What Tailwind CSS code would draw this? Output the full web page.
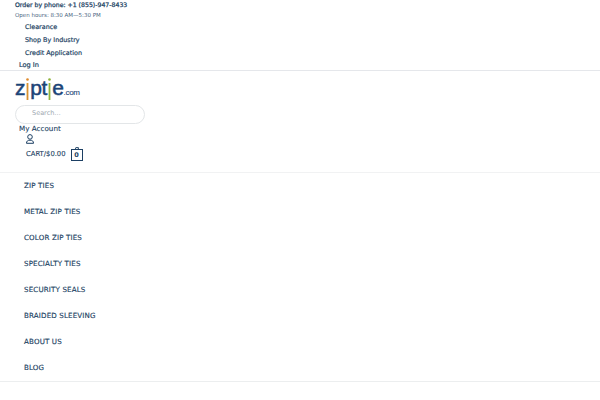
<!doctype html>
<html><head><meta charset="utf-8"><script src="https://cdn.jsdelivr.net/npm/@tailwindcss/browser@4"></script></head>
<body class="bg-white">
<div class="w-[600px] h-[400px] overflow-hidden bg-white text-[#1c3f63] font-['DejaVu_Sans',sans-serif] text-[7px]">
  <div class="h-[70px]">
    <div class="h-[10px] pl-[15px] leading-[10px] text-[6.200px] [-webkit-text-stroke:0.25px_#1c3f63]">Order by phone: +1 (855)-947-8433</div>
    <div class="h-[11px] pl-[15px] leading-[11px] text-[5.500px] text-[#4a6580]">Open hours: 8:30 AM—5:30 PM</div>
    <div class="pl-[25px] flex flex-col text-[6.400px] [-webkit-text-stroke:0.2px_#1c3f63]">
      <div class="h-[13px] leading-[13px]">Clearance</div>
      <div class="h-[13px] leading-[13px]">Shop By Industry</div>
      <div class="h-[13px] leading-[13px]">Credit Application</div>
    </div>
    <div class="pl-[19px] h-[11px] leading-[11px] text-[6.600px] [-webkit-text-stroke:0.2px_#1c3f63]">Log In</div>
  </div>
  <div class="h-px bg-[#e5e7eb]"></div>
  <div class="h-[34px] pl-[15px] flex items-center">
    <div class="relative flex items-baseline h-[26px] text-[#1b4477] font-['Liberation_Sans',sans-serif] leading-[26px] tracking-[-0.3px] [-webkit-text-stroke:0.5px_#1b4477]">
      <span class="text-[21px]">z</span>
      <svg class="w-[5px] h-[24px] self-center" viewBox="0 0 5 24"><circle cx="2.500" cy="3.500" r="1.300" fill="#e08a2c"/><path d="M2.500 7V24" stroke="#d9922f" stroke-width="1.800"/></svg>
      <span class="text-[21px]">pt</span>
      <svg class="w-[5px] h-[24px] self-center" viewBox="0 0 5 24"><circle cx="2.500" cy="3.500" r="1.300" fill="#8fb43a"/><path d="M2.500 7V24" stroke="#8fb43a" stroke-width="1.800"/></svg>
      <span class="text-[21px]">e</span><span class="text-[8px] [-webkit-text-stroke:0.1px_#1b4477]">.com</span>
    </div>
  </div>
  <div class="pl-[15px] h-[19px]">
    <div class="w-[130px] h-[19px] rounded-full border border-[#e3e6e8] pl-[16px] leading-[15px] text-[#a0a8b0] text-[6.500px]">Search…</div>
  </div>
  <div class="pl-[19px] h-[10px] leading-[9px] text-[7.200px] [-webkit-text-stroke:0.1px_#1c3f63]">My Account</div>
  <div class="pl-[26px] h-[11px] flex items-start">
    <svg class="w-[8px] h-[10px]" viewBox="0 0 8 10" fill="none" stroke="#1c3f63" stroke-width="1"><circle cx="4" cy="2.900" r="2.300"/><path d="M.5 9.300c0-2.300 1.300-3.100 3.500-3.100s3.500.8 3.500 3.100z"/></svg>
  </div>
  <div class="pl-[26px] h-[18px] flex items-center gap-[5px]">
    <span class="text-[6.800px] [-webkit-text-stroke:0.1px_#1c3f63]">CART/$0.00</span>
    <span class="relative w-[12px] h-[12px] border border-[#1c3f63] mt-[1px] text-[6.500px] leading-[10px] text-center font-bold"><span class="absolute -top-[3px] left-[3px] w-[4px] h-[3px] border border-b-0 border-[#1c3f63] rounded-t-full"></span>0</span>
  </div>
  <div class="h-px bg-[#f1f2f3] mt-[9px]"></div>
  <nav class="pl-[24px] flex flex-col text-[7.100px] tracking-[0.15px] [-webkit-text-stroke:0.15px_#1c3f63]">
    <div class="h-[26px] leading-[26px]">ZIP TIES</div>
    <div class="h-[26px] leading-[26px]">METAL ZIP TIES</div>
    <div class="h-[26px] leading-[26px]">COLOR ZIP TIES</div>
    <div class="h-[26px] leading-[26px]">SPECIALTY TIES</div>
    <div class="h-[26px] leading-[26px]">SECURITY SEALS</div>
    <div class="h-[26px] leading-[26px]">BRAIDED SLEEVING</div>
    <div class="h-[26px] leading-[26px]">ABOUT US</div>
    <div class="h-[26px] leading-[26px]">BLOG</div>
  </nav>
  <div class="h-px bg-[#eceeef]"></div>
</div>
</body></html>
